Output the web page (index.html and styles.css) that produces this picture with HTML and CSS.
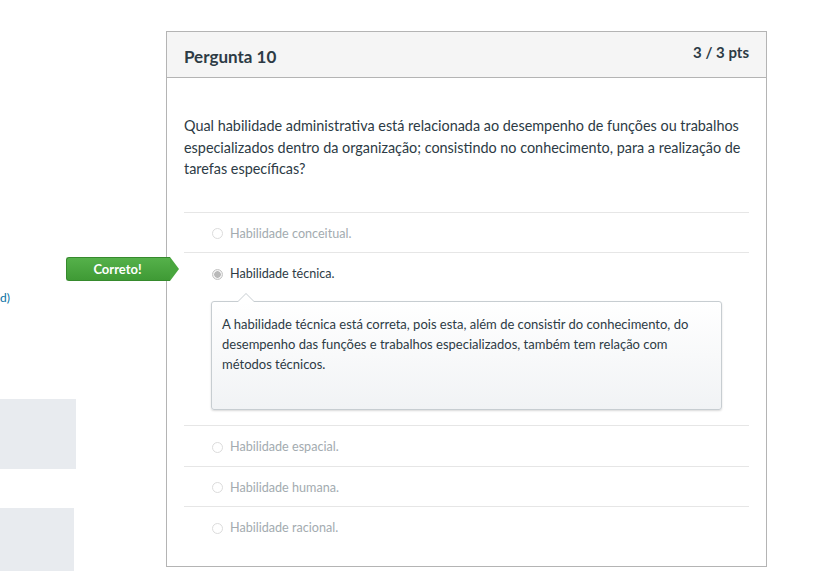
FILE: index.html
```html
<!DOCTYPE html>
<html lang="pt">
  <head>
    <meta charset="UTF-8" />
    <title>Pergunta 10</title>
    <link rel="stylesheet" href="styles.css">
  </head>
  <body>
    <div class="page">
      <div class="sidebar">
        <a class="side-link" href="#">d)</a>
        <div class="side-block"></div>
        <div class="side-block short"></div>
      </div>

      <div class="question">
        <div class="q-header">
          <span class="q-title">Pergunta 10</span>
          <span class="q-points">3 / 3 pts</span>
        </div>

        <div class="q-content">
          <p class="q-text">Qual habilidade administrativa está relacionada ao desempenho de funções ou trabalhos especializados dentro da organização; consistindo no conhecimento, para a realização de tarefas específicas?</p>

          <div class="answers">
            <div class="answer">
              <span class="radio"></span>
              <span class="answer-text">Habilidade conceitual.</span>
            </div>
            <div class="answer selected">
              <span class="badge">Correto!</span>
              <span class="radio"></span>
              <span class="answer-text">Habilidade técnica.</span>
              <div class="feedback">
                A habilidade técnica está correta, pois esta, além de consistir do conhecimento, do desempenho das funções e trabalhos especializados, também tem relação com métodos técnicos.
              </div>
            </div>
            <div class="answer">
              <span class="radio"></span>
              <span class="answer-text">Habilidade espacial.</span>
            </div>
            <div class="answer">
              <span class="radio"></span>
              <span class="answer-text">Habilidade humana.</span>
            </div>
            <div class="answer">
              <span class="radio"></span>
              <span class="answer-text">Habilidade racional.</span>
            </div>
          </div>
        </div>
      </div>
    </div>
  </body>
</html>
```

FILE: styles.css
```css
body {
  margin: 0;
  background: #fff;
  font-family: Lato, "Open Sans", sans-serif;
  color: #2d3b45;
}
.page {
  display: flex;
  align-items: flex-start;
  height: 571px;
  overflow: hidden;
}
.sidebar {
  width: 166px;
  flex-shrink: 0;
  padding-top: 288px;
  overflow: hidden;
}
.side-link {
  display: block;
  font-size: 12px;
  line-height: 20px;
  color: #0770a3;
  text-decoration: none;
}
.side-block {
  width: 76px;
  height: 70px;
  margin-top: 91px;
  background: #e8ebef;
}
.side-block.short {
  width: 74px;
  margin-top: 39px;
}
.question {
  width: 599px;
  margin-top: 31px;
  border: 1px solid #b4b4b4;
  background: #fff;
}
.q-header {
  display: flex;
  justify-content: space-between;
  align-items: flex-start;
  height: 45px;
  padding: 0 17px;
  background: #f5f5f5;
  border-bottom: 1px solid #b4b4b4;
}
.q-title {
  font-size: 17px;
  font-weight: bold;
  line-height: 20px;
  margin-top: 15px;
}
.q-points {
  font-size: 15px;
  font-weight: bold;
  line-height: 18px;
  margin-top: 11px;
}
.q-content {
  padding: 37px 17px 19px 17px;
}
.q-text {
  margin: 0 0 32px 0;
  font-size: 14.4px;
  line-height: 21.5px;
}
.answer {
  position: relative;
  border-top: 1px solid #e6e6e6;
  padding: 13px 0 10.5px 28px;
  display: flex;
  flex-wrap: wrap;
  align-items: center;
  font-size: 12.6px;
  line-height: 16px;
  color: #a3abb0;
}
.answer.selected {
  color: #2d3b45;
  padding-bottom: 15px;
}
.radio {
  width: 9px;
  height: 9px;
  border: 1px solid #dcdcdc;
  border-radius: 50%;
  margin-right: 7px;
  background: #fff;
}
.selected .radio {
  border-color: #c4c4c4;
  background: radial-gradient(circle, #b9b9b9 0 3px, #f0f0f0 3.5px);
}
.feedback {
  position: relative;
  flex-basis: 100%;
  box-sizing: border-box;
  max-width: 511px;
  margin: 19px 0 0 -1px;
  min-height: 109px;
  padding: 12px 14px 12px 10px;
  border: 1px solid #c7cdd1;
  border-radius: 3px;
  background: linear-gradient(#fff, #f1f3f5);
  box-shadow: 0 1px 2px rgba(0, 0, 0, 0.15);
  font-size: 13px;
  line-height: 20px;
  color: #2d3b45;
}
.feedback::before,
.feedback::after {
  content: "";
  position: absolute;
  left: 25px;
  width: 0;
  height: 0;
  border: 9px solid transparent;
  border-top: 0;
}
.feedback::before {
  top: -9px;
  border-bottom: 9px solid #c7cdd1;
}
.feedback::after {
  top: -8px;
  border-bottom: 9px solid #fff;
}
.badge {
  position: absolute;
  left: -118px;
  top: 4px;
  height: 24px;
  width: 104px;
  box-sizing: border-box;
  padding-right: 2px;
  text-align: center;
  background: linear-gradient(#55b14a, #3f9a35);
  border-radius: 3px 0 0 3px;
  border: 1px solid #368a2d;
  border-right: 0;
  color: #fff;
  font-size: 13px;
  font-weight: bold;
  line-height: 22px;
}
.badge::after {
  content: "";
  position: absolute;
  top: -1px;
  right: -9px;
  border-top: 12px solid transparent;
  border-bottom: 12px solid transparent;
  border-left: 9px solid #49a63e;
}
```
